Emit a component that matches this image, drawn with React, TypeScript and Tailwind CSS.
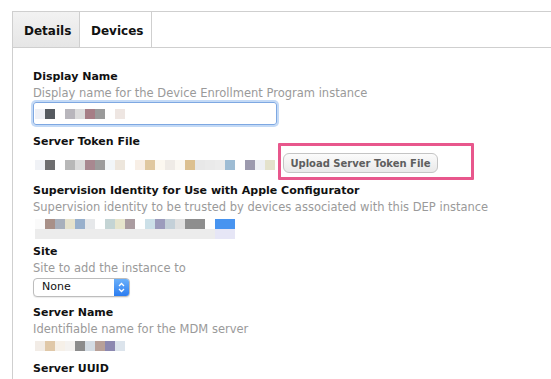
import React from "react";

const font = { fontFamily: '"DejaVu Sans", Verdana, sans-serif' };

function Blocks({ colors, className = "" }: { colors: string[]; className?: string }) {
  return (
    <div className={"flex h-[10px] " + className}>
      {colors.map((c, i) => (
        <div key={i} className="w-[10px] h-[10px]" style={{ backgroundColor: c }} />
      ))}
    </div>
  );
}

const row1 = ["#eef0f6", "#555a60", "#ffffff", "#b8b6bc", "#dcdcdc", "#a67e86", "#9a9a9a", "#ffffff", "#eee6e2"];
const row2 = ["#f0f2f6", "#6e6e70", "#ffffff", "#b8b8b8", "#dcdcdc", "#a88890", "#9c9c9c", "#f2f6f8", "#ede6dc", "#ffffff", "#f8efe6", "#e0c8a0", "#fcf8f0", "#efebe6", "#fbf8f2", "#dcc090", "#e8e8e8", "#eaeaea", "#ececec", "#9ebcd4", "#ffffff", "#9c9aae", "#eef0f4", "#e4e2cc"];
const row3 = ["#fafafa", "#a89088", "#a8b0bc", "#e6e2cc", "#98b0cc", "#e6e8ea", "#ffffff", "#c4d4d4", "#e6e4cc", "#aa9ca0", "#ffffff", "#cce0e8", "#9c9cbc", "#c4d0d8", "#e0e0e0", "#8e8e8e", "#8e8e8e", "#ffffff", "#4894f0", "#4894f0"];
const row3b = ["#ececec", "#ececec", "#ececec", "#ececec", "#ececec", "#ececec", "#ececec", "#ececec", "#ececec", "#ececec", "#ececec", "#ececec", "#ececec", "#ececec", "#ececec", "#ececec", "#ececec", "#ececec", "#e6e6f6", "#e6e6f6"];
const row4 = ["#f2ece6", "#e0c8a8", "#f6f0e8", "#f4f2f0", "#8c8c8c", "#d4dce4", "#b8a098", "#8c88b0", "#dce4ec"];

function Label({ children, className = "" }: { children: React.ReactNode; className?: string }) {
  return <div className={"text-[11px] leading-[14px] font-bold text-[#111] " + className}>{children}</div>;
}
function Help({ children, className = "" }: { children: React.ReactNode; className?: string }) {
  return <div className={"text-[11.5px] leading-[14px] text-[#9a9a9a] " + className}>{children}</div>;
}

export default function App() {
  return (
    <div className="w-[551px] h-[379px] overflow-hidden bg-white pt-[11px] pl-[12px]" style={font}>
      <div className="border-l border-t border-[#cfcfcf] h-[400px]">
        <div className="flex h-[36px] border-b border-[#cfcfcf]">
          <div className="w-[67px] flex items-center pl-[11px] pt-[2px] bg-gradient-to-b from-[#f2f2f2] to-[#e6e6e6] border-r border-[#cfcfcf] text-[12px] font-bold text-[#111]">
            Details
          </div>
          <div className="w-[72px] flex items-center pl-[11px] pt-[2px] border-r border-[#cfcfcf] text-[12px] font-bold text-[#111]">
            Devices
          </div>
        </div>
        <div className="pl-[20px]">
          <Label className="mt-[22px]">Display Name</Label>
          <Help className="mt-[2px]">Display name for the Device Enrollment Program instance</Help>
          <div className="mt-[2px] w-[244px] h-[23px] rounded-[3px] border border-[#7ea8e2] shadow-[0_0_0_2px_#c4daf6] flex items-center pl-[1px]">
            <Blocks colors={row1} className="mt-[1px]" />
          </div>
          <Label className="mt-[10px]">Server Token File</Label>
          <div className="flex items-center mt-[4px] relative">
            <Blocks colors={row2} className="ml-[2px] mt-[4px]" />
            <div className="ml-[8px] w-[155px] h-[20px] rounded-[6px] border border-[#c4c4c4] bg-gradient-to-b from-[#fbfbfb] to-[#e9e9e9] flex items-center justify-center text-[10px] font-bold text-[#5e5e5e]">
              Upload Server Token File
            </div>
            <div className="absolute left-[245px] top-[-10px] w-[196px] h-[37px] border-[3px] border-[#e8578c] rounded-[1px]" />
          </div>
          <Label className="mt-[11px]">Supervision Identity for Use with Apple Configurator</Label>
          <Help className="mt-[2px]">Supervision identity to be trusted by devices associated with this DEP instance</Help>
          <Blocks colors={row3} className="ml-[2px] mt-[5px]" />
          <Blocks colors={row3b} className="ml-[2px]" />
          <Label className="mt-[6px]">Site</Label>
          <Help className="mt-[2px]">Site to add the instance to</Help>
          <div className="mt-[3px] w-[97px] h-[19px] rounded-[4px] border border-[#bdbdbd] bg-white flex items-center shadow-[0_1px_1px_rgba(0,0,0,0.08)] overflow-hidden">
            <div className="flex-1 pl-[8px] text-[11px] text-[#111]">None</div>
            <div className="w-[15px] h-full bg-gradient-to-b from-[#6ab0fa] to-[#2a7cf0] flex items-center justify-center">
              <svg width="7" height="11" viewBox="0 0 7 11" fill="none" stroke="white" strokeWidth="1.3">
                <path d="M1 4 L3.5 1.5 L6 4" />
                <path d="M1 7 L3.5 9.5 L6 7" />
              </svg>
            </div>
          </div>
          <Label className="mt-[9px]">Server Name</Label>
          <Help className="mt-[2px]">Identifiable name for the MDM server</Help>
          <Blocks colors={row4} className="ml-[2px] mt-[5px]" />
          <Label className="mt-[11px]">Server UUID</Label>
        </div>
      </div>
    </div>
  );
}
